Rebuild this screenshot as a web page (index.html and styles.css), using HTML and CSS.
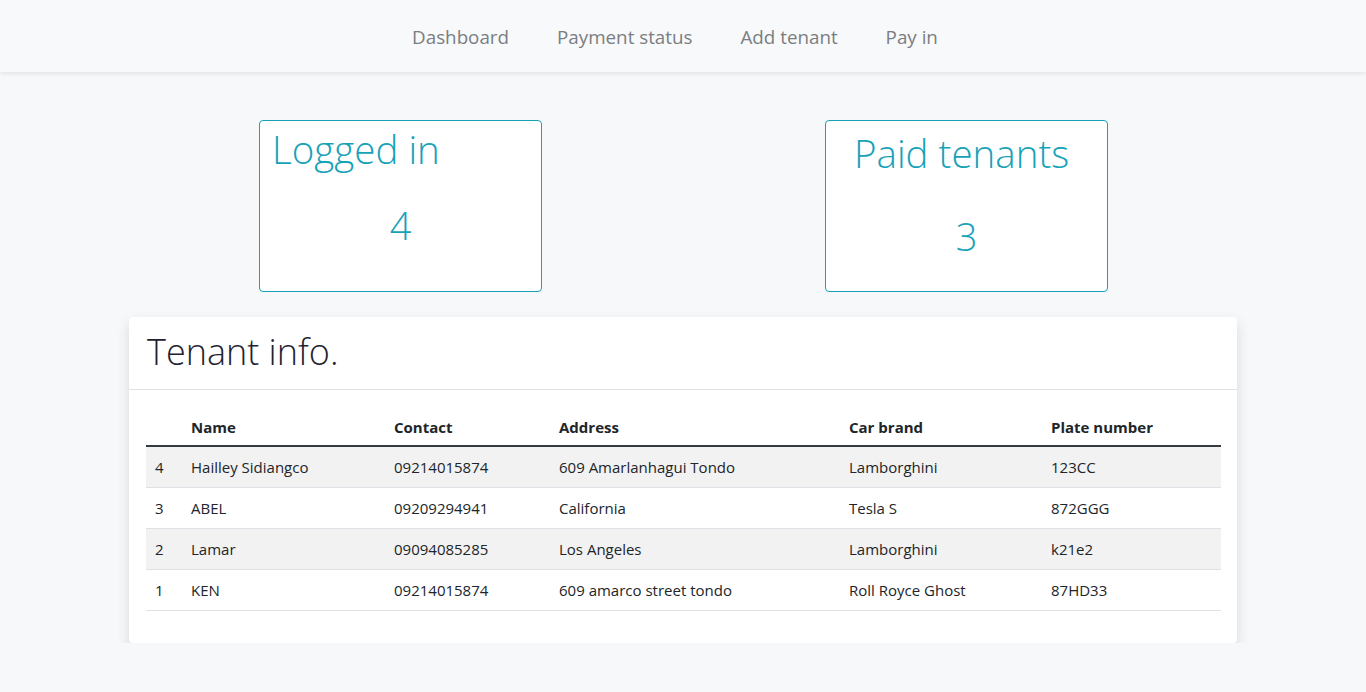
FILE: index.html
```html
<!DOCTYPE html>
<html lang="en">
<head>
<meta charset="utf-8">
<title>Tenant dashboard</title>
<link rel="stylesheet" href="styles.css">
</head>
<body>
<nav class="navbar">
  <a class="nav-link" href="#">Dashboard</a>
  <a class="nav-link" href="#">Payment status</a>
  <a class="nav-link" href="#">Add tenant</a>
  <a class="nav-link" href="#">Pay in</a>
</nav>
<main class="container">
  <section class="stats">
    <div class="stat-card">
      <h2 class="stat-title">Logged in</h2>
      <p class="stat-value">4</p>
    </div>
    <div class="stat-card stat-card-alt">
      <h2 class="stat-title">Paid tenants</h2>
      <p class="stat-value">3</p>
    </div>
  </section>
  <section class="info-card">
    <h1 class="info-title">Tenant info.</h1>
    <div class="info-body">
      <table class="tenants">
        <thead>
          <tr><th class="c-id"></th><th class="c-name">Name</th><th class="c-contact">Contact</th><th class="c-address">Address</th><th class="c-car">Car brand</th><th class="c-plate">Plate number</th></tr>
        </thead>
        <tbody>
          <tr><td>4</td><td>Hailley Sidiangco</td><td>09214015874</td><td>609 Amarlanhagui Tondo</td><td>Lamborghini</td><td>123CC</td></tr>
          <tr><td>3</td><td>ABEL</td><td>09209294941</td><td>California</td><td>Tesla S</td><td>872GGG</td></tr>
          <tr><td>2</td><td>Lamar</td><td>09094085285</td><td>Los Angeles</td><td>Lamborghini</td><td>k21e2</td></tr>
          <tr><td>1</td><td>KEN</td><td>09214015874</td><td>609 amarco street tondo</td><td>Roll Royce Ghost</td><td>87HD33</td></tr>
        </tbody>
      </table>
    </div>
  </section>
</main>
</body>
</html>
```
FILE: styles.css
```css
* { box-sizing: border-box; }
html, body { margin: 0; padding: 0; }
body {
  background: #f7f8fa;
  font-family: "Open Sans", "Noto Sans", sans-serif;
  color: #212529;
}
.navbar {
  height: 72px;
  background: #f8f9fa;
  box-shadow: 0 2px 4px rgba(0,0,0,0.08);
  display: flex;
  justify-content: center;
  align-items: center;
  gap: 48px;
  padding-right: 16px;
  padding-top: 2px;
}
.nav-link {
  color: #7a7e82;
  text-decoration: none;
  font-size: 18.8px;
}
.container {
  width: 1108px;
  margin: 0 auto;
  padding-top: 48px;
}
.stats {
  display: grid;
  grid-template-columns: 283px 283px;
  column-gap: 283px;
  justify-content: center;
  padding-left: 1px;
}
.stat-card {
  width: 283px;
  height: 172px;
  background: #fff;
  border: 1px solid #17a2b8;
  border-radius: 4px;
  color: #17a2b8;
  padding: 4px 12px;
}
.stat-card-alt { padding: 8px 28px; }
.stat-title {
  margin: 0;
  font-weight: 300;
  font-size: 38.5px;
  line-height: 48px;
}
.stat-value {
  margin: 28px 0 0;
  text-align: center;
  font-weight: 300;
  font-size: 38px;
  line-height: 48px;
}
.stat-card-alt .stat-value { margin-top: 35px; }
.info-card {
  margin-top: 25px;
  background: #fff;
  border-radius: 4px;
  box-shadow: 0 6px 14px rgba(0,0,0,0.13);
}
.info-title {
  margin: 0;
  padding: 10px 18px 12px;
  font-weight: 300;
  font-size: 36px;
  line-height: 50px;
  border-bottom: 1px solid #dee2e6;
  color: #1f2330;
}
.info-body {
  padding: 18px 16px 32px 17px;
}
.tenants {
  width: 100%;
  border-collapse: collapse;
  font-size: 15px;
}
.tenants th, .tenants td {
  text-align: left;
  padding: 0 9px;
  height: 41px;
}
.tenants th {
  font-weight: 700;
  height: 38px;
  border-bottom: 2px solid #343a40;
  vertical-align: middle;
}
.tenants td { border-bottom: 1px solid #dee2e6; }
.tenants tbody tr:nth-child(odd) { background: #f2f2f2; }
.c-id { width: 36px; }
.c-name { width: 203px; }
.c-contact { width: 165px; }
.c-address { width: 290px; }
.c-car { width: 202px; }
```
